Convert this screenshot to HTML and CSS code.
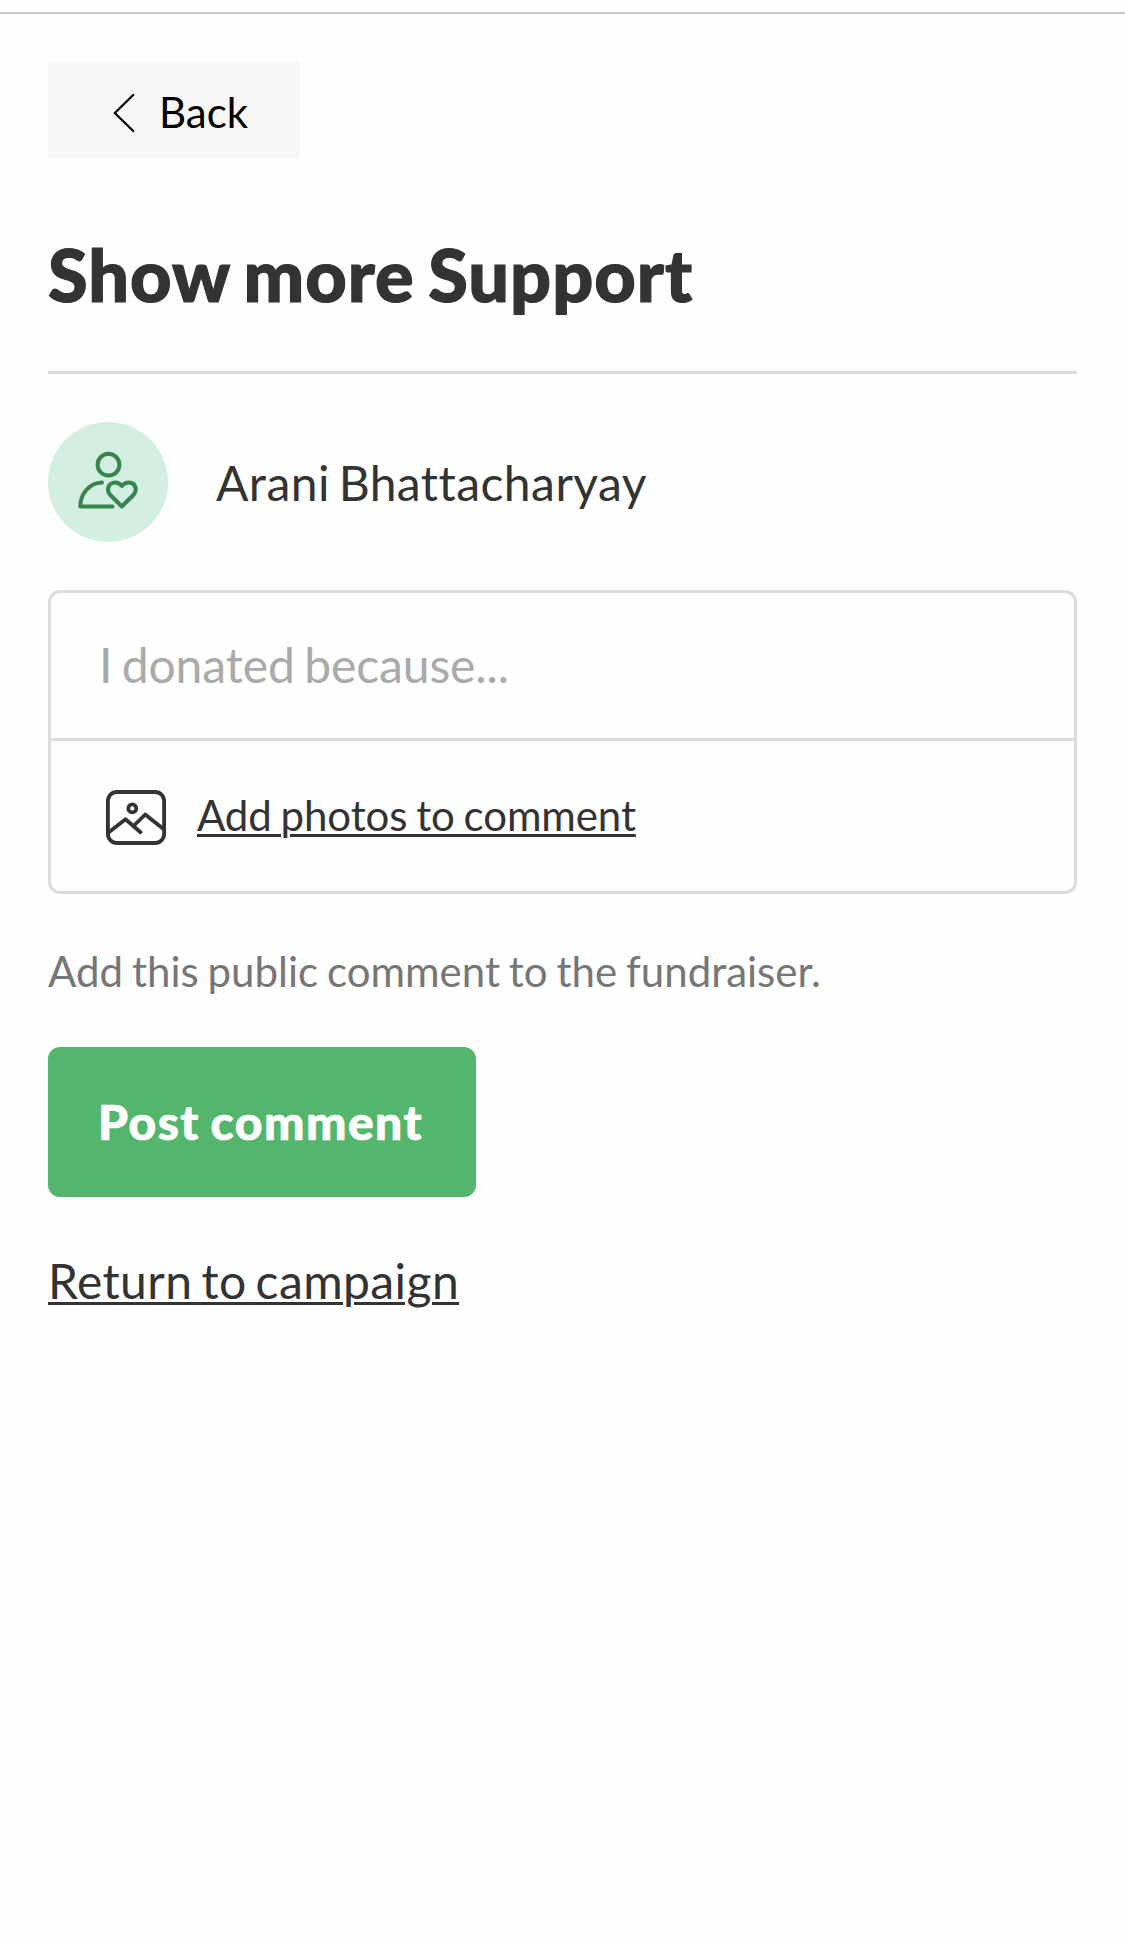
FILE: index.html
```html
<!DOCTYPE html>
<html lang="en">
<head>
<meta charset="utf-8">
<title>Show more Support</title>
<link rel="stylesheet" href="styles.css">
</head>
<body>
<div class="topbar"></div>
<main class="page">
  <button class="back" type="button">
    <svg class="back-icon" width="24" height="42" viewBox="0 0 24 42" fill="none" stroke="currentColor" stroke-width="2.3" stroke-linecap="round" stroke-linejoin="round"><path d="M21.2 4 2.800 22l18.400 18"/></svg>
    <span>Back</span>
  </button>
  <h1 class="title">Show more Support</h1>
  <section class="donor">
    <div class="avatar">
      <svg width="120" height="120" viewBox="0 0 120 120" fill="none" stroke="currentColor" stroke-width="4" stroke-linecap="round" stroke-linejoin="round">
        <circle cx="60.500" cy="42.700" r="10.900"/>
        <path d="M54 60.500C41 61 32.300 72 32.300 84.500H64.500"/>
        <path d="M73.800 84.500 62.300 73C58.800 69.300 59 62.500 65 60.800C68.800 59.800 71.500 61.300 73.800 64C76.200 61.300 79 59.800 82.700 60.800C88.600 62.500 89 69.300 85.400 73Z"/>
      </svg>
    </div>
    <span class="name">Arani Bhattacharyay</span>
  </section>
  <section class="composer">
    <div class="message">I donated because...</div>
    <div class="photos">
      <svg class="photo-icon" width="62" height="56" viewBox="0 0 62 56" fill="none" stroke="currentColor" stroke-width="3.800" stroke-linecap="round" stroke-linejoin="round">
        <rect x="2.900" y="2" width="56.200" height="51" rx="9"/>
        <circle cx="27.300" cy="18.400" r="4" />
        <path d="M3.500 42.500 20.500 29.200 35.500 42.300M29.500 35 40.200 24.500 58.500 39"/>
      </svg>
      <a class="link photo-link">Add photos to comment</a>
    </div>
  </section>
  <p class="hint">Add this public comment to the fundraiser.</p>
  <button class="post" type="button">Post comment</button>
  <a class="link return">Return to campaign</a>
</main>
</body>
</html>
```
FILE: styles.css
```css
* { box-sizing: border-box; }

body {
  margin: 0;
  background: #fefefe;
  color: #333;
  font-family: Lato, "Liberation Sans", sans-serif;
  font-size: 48px;
  font-variant-ligatures: none;
}

button {
  border: 0;
  font-family: inherit;
}

.topbar {
  height: 14px;
  border-bottom: 2px solid #c6c6cd;
}

.page {
  display: flex;
  flex-direction: column;
  align-items: flex-start;
  padding: 48px 48px 0;
}

.back {
  display: flex;
  align-items: center;
  gap: 23px;
  width: 252px;
  height: 96px;
  padding: 4px 0 0 64px;
  background: #f8f7f6;
  color: #000;
  font-size: 42px;
}

.title {
  align-self: stretch;
  height: 143px;
  margin: 73px 0 48px;
  border-bottom: 3px solid #dcdcdc;
  font-size: 72px;
  font-weight: 900;
  line-height: 86px;
  letter-spacing: 1px;
  word-spacing: -4.5px;
  -webkit-text-stroke: 1.2px currentColor;
}

.donor {
  display: flex;
  align-items: center;
  gap: 48px;
}

.name {
  letter-spacing: 0.45px;
  word-spacing: -4px;
}

.avatar {
  width: 120px;
  height: 120px;
  border-radius: 50%;
  background: #d3efe1;
  color: #37844c;
}

.avatar svg { display: block; }

.composer {
  align-self: stretch;
  margin-top: 48px;
  border: 3px solid #dcdcdc;
  border-radius: 12px;
}

.message {
  height: 148px;
  padding: 0 48px;
  border-bottom: 3px solid #dcdcdc;
  color: #aaa;
  line-height: 144px;
  letter-spacing: -0.1px;
  word-spacing: -2.8px;
}

.photos {
  display: flex;
  align-items: center;
  gap: 30px;
  height: 150px;
  padding: 0 54px 2px 54px;
}

.photo-icon { margin-top: 6px; }

.link {
  text-decoration: underline;
  text-decoration-thickness: 3px;
  text-underline-offset: 3px;
}

.photo-link {
  font-size: 42px;
  letter-spacing: -0.1px;
  word-spacing: -1.8px;
}

.hint {
  margin: 44px 0 0;
  color: #767676;
  font-size: 42px;
  line-height: 66px;
  word-spacing: -1.85px;
}

.post {
  width: 428px;
  height: 150px;
  margin-top: 43px;
  padding: 0 3px 2px 0;
  border-radius: 12px;
  background: #54b66d;
  color: #fff;
  font-size: 48px;
  font-weight: 900;
  letter-spacing: 1.5px;
  word-spacing: -2.500px;
  -webkit-text-stroke: 0.7px currentColor;
}

.return {
  margin-top: 48px;
  line-height: 72px;
  letter-spacing: 0.4px;
  word-spacing: -3.6px;
}
```
